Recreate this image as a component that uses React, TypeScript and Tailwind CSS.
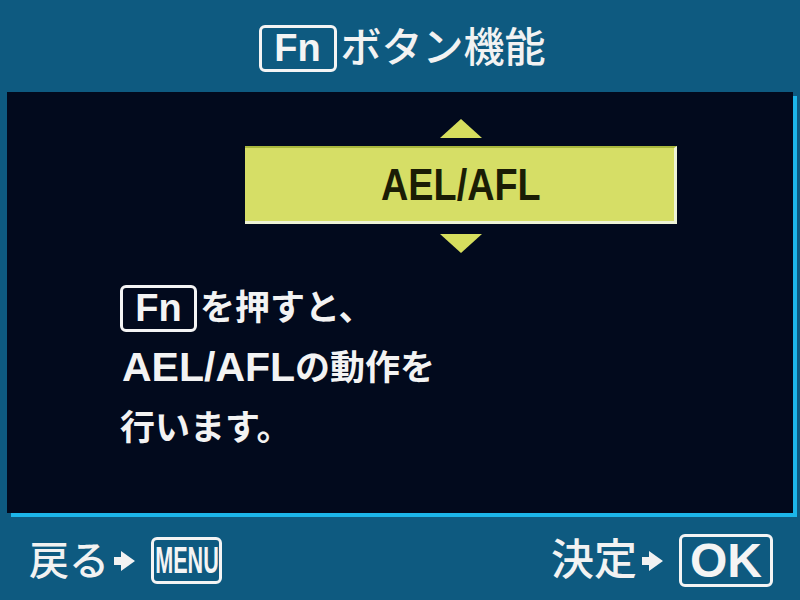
import React from "react";

const font = "font-['Liberation_Sans','Noto_Sans_CJK_JP',sans-serif]";

function Arrow() {
  return (
    <svg width="24" height="22" viewBox="0 0 24 22" className="shrink-0">
      <polygon points="1,7 8,7 8,1 22,11 8,21 8,15 1,15" fill="#f2f2f2" />
    </svg>
  );
}

function KeyBox({ children, className }: { children: React.ReactNode; className: string }) {
  return (
    <div className={`flex items-center justify-center border-[3px] border-[#f4f4f4] rounded-[6px] text-[#f4f4f4] font-bold ${className}`}>
      {children}
    </div>
  );
}

function Triangle({ down }: { down?: boolean }) {
  return (
    <svg width="44" height="21" viewBox="0 0 44 21">
      <polygon points={down ? "1,1 43,1 22,20" : "22,1 43,20 1,20"} fill="#d6de5e" />
    </svg>
  );
}

export default function App() {
  return (
    <div className={`w-[800px] h-[600px] bg-[#0e5a80] flex flex-col overflow-hidden ${font}`}>
      {/* title */}
      <div className="h-[92px] flex items-center justify-center gap-[4px] pt-[4px] pl-[4px]">
        <KeyBox className="w-[78px] h-[47px] text-[38px] leading-none">Fn</KeyBox>
        <span className="text-[41px] leading-none font-medium text-[#f2f2f2]">ボタン機能</span>
      </div>

      {/* main panel */}
      <div className="mx-[7px] h-[421px] bg-[#020a1d] shadow-[4px_4px_0_#1cb6ea] flex flex-col">
        <div className="pl-[238px] pt-[26px] w-[670px] flex flex-col items-center gap-[7px]">
          <Triangle />
          <div className="w-[432px] h-[78px] bg-[#d6de66] border-t-[2px] border-t-[#a9b83e] border-r-[3px] border-b-[3px] border-r-[#eef3d6] border-b-[#eef3d6] flex items-center justify-center">
            <span className="inline-block text-[45px] leading-none font-bold text-[#1b1d05] scale-x-[0.84] pl-[2px]">AEL/AFL</span>
          </div>
          <div className="mt-[2px]">
            <Triangle down />
          </div>
        </div>

        <div className="pl-[113px] pt-[24px] flex flex-col text-[#f3f3f3] font-bold text-[35px]">
          <div className="h-[60px] flex items-center gap-[3px]">
            <KeyBox className="w-[77px] h-[47px] text-[38px] leading-none">Fn</KeyBox>
            <span>を押すと、</span>
          </div>
          <div className="h-[60px] flex items-center pl-[2px]">
            <span className="text-[41px]">AEL/AFL</span>
            <span>の動作を</span>
          </div>
          <div className="h-[60px] flex items-center">
            <span>行います。</span>
          </div>
        </div>
      </div>

      {/* footer */}
      <div className="flex-1 flex items-center justify-between pl-[29px] pr-[27px] pt-[8px] text-[#f2f2f2] font-bold">
        <div className="flex items-center gap-[4px]">
          <span className="text-[40px] leading-none font-medium">戻る</span>
          <Arrow />
          <KeyBox className="ml-[10px] w-[71px] h-[47px] text-[36px] leading-none">
            <span className="inline-block scale-x-[0.6]">MENU</span>
          </KeyBox>
        </div>
        <div className="flex items-center gap-[4px]">
          <span className="text-[43px] leading-none font-medium">決定</span>
          <Arrow />
          <KeyBox className="ml-[10px] w-[94px] h-[53px] text-[48px] leading-none">OK</KeyBox>
        </div>
      </div>
    </div>
  );
}
